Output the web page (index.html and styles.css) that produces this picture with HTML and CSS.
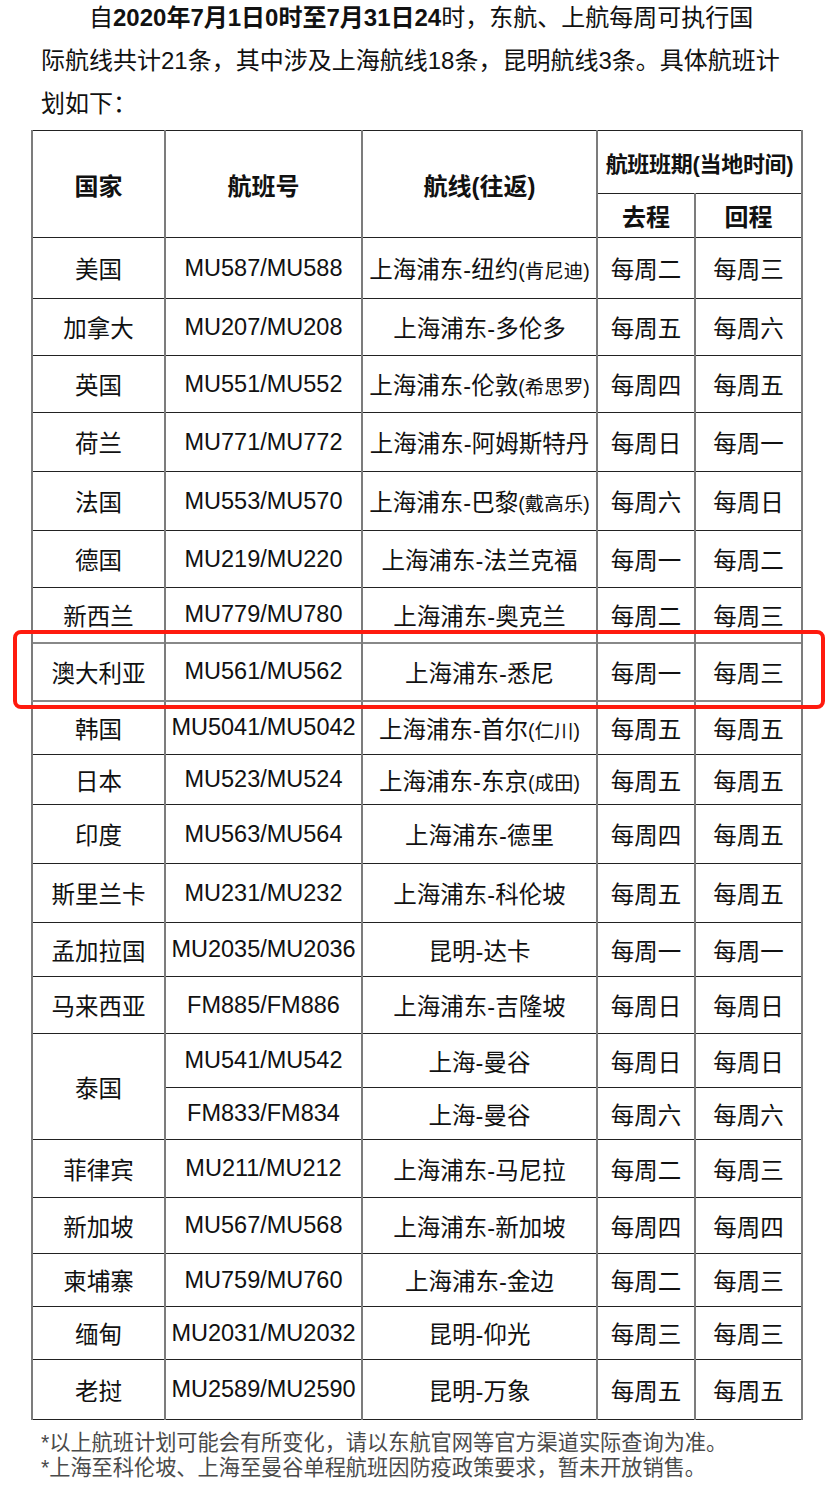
FILE: index.html
```html
<!DOCTYPE html>
<html lang="zh-CN">
<head>
<meta charset="utf-8">
<title>国际航线航班计划</title>
<link rel="stylesheet" href="styles.css">
</head>
<body>
<p class="intro">自<b>2020年7月1日0时至7月31日24</b>时，东航、上航每周可执行国<br>际航线共计21条，其中涉及上海航线18条，昆明航线3条。具体航班计<br>划如下：</p>
<div class="table-wrap">
<table class="flights">
<colgroup>
<col class="c1"><col class="c2"><col class="c3"><col class="c4"><col class="c5">
</colgroup>
<thead>
<tr class="h1">
<th rowspan="2">国家</th>
<th rowspan="2">航班号</th>
<th rowspan="2">航线(往返)</th>
<th colspan="2" class="period">航班班期(当地时间)</th>
</tr>
<tr class="h2">
<th>去程</th>
<th>回程</th>
</tr>
</thead>
<tbody>
<tr><td>美国</td><td>MU587/MU588</td><td>上海浦东-纽约<small>(肯尼迪)</small></td><td>每周二</td><td>每周三</td></tr>
<tr><td>加拿大</td><td>MU207/MU208</td><td>上海浦东-多伦多</td><td>每周五</td><td>每周六</td></tr>
<tr><td>英国</td><td>MU551/MU552</td><td>上海浦东-伦敦<small>(希思罗)</small></td><td>每周四</td><td>每周五</td></tr>
<tr><td>荷兰</td><td>MU771/MU772</td><td>上海浦东-阿姆斯特丹</td><td>每周日</td><td>每周一</td></tr>
<tr><td>法国</td><td>MU553/MU570</td><td>上海浦东-巴黎<small>(戴高乐)</small></td><td>每周六</td><td>每周日</td></tr>
<tr><td>德国</td><td>MU219/MU220</td><td>上海浦东-法兰克福</td><td>每周一</td><td>每周二</td></tr>
<tr><td>新西兰</td><td>MU779/MU780</td><td>上海浦东-奥克兰</td><td>每周二</td><td>每周三</td></tr>
<tr class="marked"><td>澳大利亚</td><td>MU561/MU562</td><td>上海浦东-悉尼</td><td>每周一</td><td>每周三</td></tr>
<tr><td>韩国</td><td>MU5041/MU5042</td><td>上海浦东-首尔<small>(仁川)</small></td><td>每周五</td><td>每周五</td></tr>
<tr><td>日本</td><td>MU523/MU524</td><td>上海浦东-东京<small>(成田)</small></td><td>每周五</td><td>每周五</td></tr>
<tr><td>印度</td><td>MU563/MU564</td><td>上海浦东-德里</td><td>每周四</td><td>每周五</td></tr>
<tr><td>斯里兰卡</td><td>MU231/MU232</td><td>上海浦东-科伦坡</td><td>每周五</td><td>每周五</td></tr>
<tr><td>孟加拉国</td><td>MU2035/MU2036</td><td>昆明-达卡</td><td>每周一</td><td>每周一</td></tr>
<tr><td>马来西亚</td><td>FM885/FM886</td><td>上海浦东-吉隆坡</td><td>每周日</td><td>每周日</td></tr>
<tr><td rowspan="2">泰国</td><td>MU541/MU542</td><td>上海-曼谷</td><td>每周日</td><td>每周日</td></tr>
<tr><td>FM833/FM834</td><td>上海-曼谷</td><td>每周六</td><td>每周六</td></tr>
<tr><td>菲律宾</td><td>MU211/MU212</td><td>上海浦东-马尼拉</td><td>每周二</td><td>每周三</td></tr>
<tr><td>新加坡</td><td>MU567/MU568</td><td>上海浦东-新加坡</td><td>每周四</td><td>每周四</td></tr>
<tr><td>柬埔寨</td><td>MU759/MU760</td><td>上海浦东-金边</td><td>每周二</td><td>每周三</td></tr>
<tr><td>缅甸</td><td>MU2031/MU2032</td><td>昆明-仰光</td><td>每周三</td><td>每周三</td></tr>
<tr><td>老挝</td><td>MU2589/MU2590</td><td>昆明-万象</td><td>每周五</td><td>每周五</td></tr>
</tbody>
</table>
<div class="highlight"></div>
</div>
<div class="notes">
<p>*以上航班计划可能会有所变化，请以东航官网等官方渠道实际查询为准。</p>
<p>*上海至科伦坡、上海至曼谷单程航班因防疫政策要求，暂未开放销售。</p>
</div>
</body>
</html>
```
FILE: styles.css
```css
html, body {
  margin: 0;
  padding: 0;
  background: #fff;
}
body {
  font-family: "Liberation Sans", "Noto Sans CJK SC", sans-serif;
  color: #111;
  width: 833px;
}
.intro {
  margin: -4px 0 0 41px;
  font-size: 24px;
  line-height: 43px;
  text-indent: 2em;
  white-space: nowrap;
  color: #111;
}
.intro b {
  font-weight: bold;
}
.table-wrap {
  position: relative;
  margin: 5px 0 0 31px;
  width: 770px;
}
.flights {
  border-collapse: collapse;
  table-layout: fixed;
  width: 770px;
  font-size: 23.5px;
}
.c1 { width: 133px; }
.c2 { width: 197px; }
.c3 { width: 235px; }
.c4 { width: 98px; }
.c5 { width: 107px; }
.flights th,
.flights td {
  padding: 0;
  text-align: center;
  vertical-align: middle;
  border-top: 1px solid #222;
  border-bottom: 1px solid #222;
  border-left: 2px solid #7c7c7c;
  border-right: 2px solid #7c7c7c;
  white-space: nowrap;
  overflow: hidden;
}
.flights th {
  font-weight: bold;
  font-size: 24px;
}
.flights th.period {
  font-size: 22px;
  letter-spacing: -0.3px;
}
.flights small {
  font-size: 19.5px;
}
.h1 { height: 63px; }
.h2 { height: 44px; }
tbody tr:nth-child(1) { height: 61px; }
tbody tr:nth-child(2) { height: 57px; }
tbody tr:nth-child(3) { height: 57px; }
tbody tr:nth-child(4) { height: 59px; }
tbody tr:nth-child(5) { height: 59px; }
tbody tr:nth-child(6) { height: 57px; }
tbody tr:nth-child(7) { height: 55px; }
tbody tr:nth-child(8) { height: 58px; }
tbody tr:nth-child(9) { height: 54px; }
tbody tr:nth-child(10) { height: 50px; }
tbody tr:nth-child(11) { height: 59px; }
tbody tr:nth-child(12) { height: 59px; }
tbody tr:nth-child(13) { height: 54px; }
tbody tr:nth-child(14) { height: 57px; }
tbody tr:nth-child(15) { height: 54px; }
tbody tr:nth-child(16) { height: 52px; }
tbody tr:nth-child(17) { height: 58px; }
tbody tr:nth-child(18) { height: 56px; }
tbody tr:nth-child(19) { height: 53px; }
tbody tr:nth-child(20) { height: 53px; }
tbody tr:nth-child(21) { height: 60px; }
.flights tr.marked td {
  border-top: 2px solid #888;
  border-bottom: 2px solid #888;
}
.highlight {
  position: absolute;
  left: -18px;
  top: 500px;
  width: 804px;
  height: 71px;
  border: 4px solid #ff1a0e;
  border-radius: 8px;
  pointer-events: none;
}
.notes {
  margin: 10px 0 0 41px;
  font-size: 21.2px;
  line-height: 25px;
  color: #4a4a4a;
}
.notes p {
  margin: 0;
}
```
